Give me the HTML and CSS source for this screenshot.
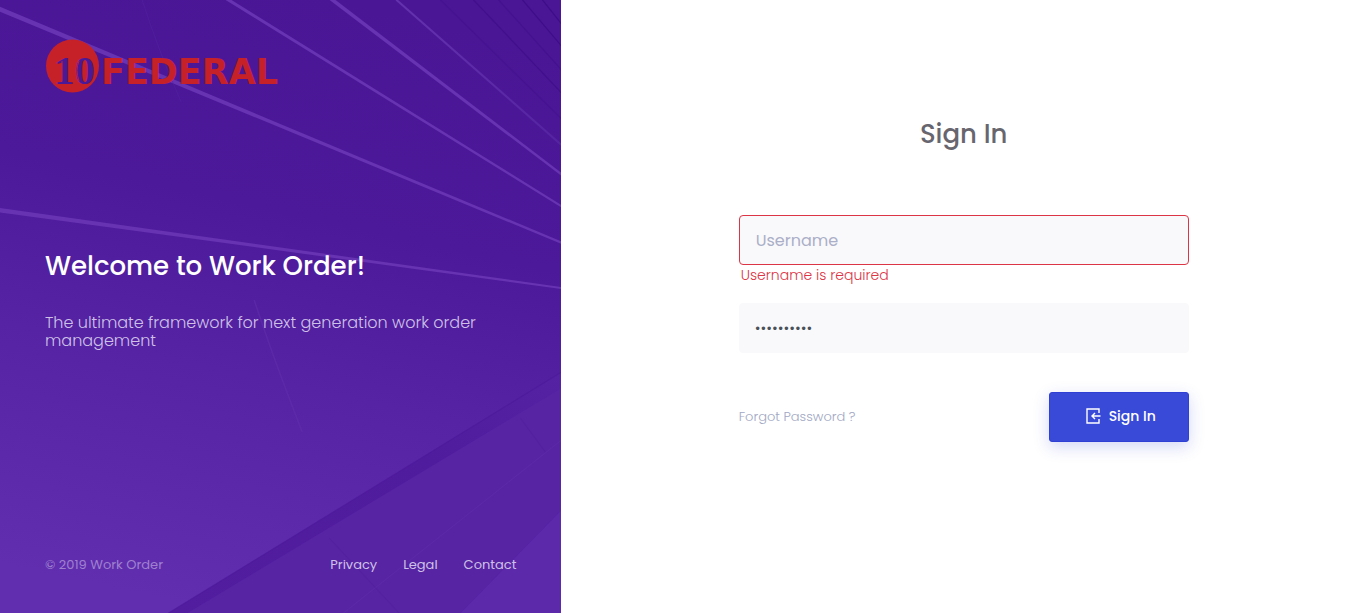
FILE: index.html
```html
<!DOCTYPE html>
<html lang="en">
<head>
<meta charset="utf-8">
<meta name="viewport" content="width=device-width, initial-scale=1">
<title>Work Order</title>
<link rel="stylesheet" href="styles.css">
</head>
<body>
<div class="login">
  <aside class="aside">
    <svg class="aside-art" viewBox="0 0 561 613" preserveAspectRatio="xMidYMid slice" aria-hidden="true">
      <defs>
        <linearGradient id="sky" x1="0.6" y1="0" x2="0.4" y2="1">
          <stop offset="0" stop-color="#4a1696"/>
          <stop offset="0.35" stop-color="#4c199a"/>
          <stop offset="0.62" stop-color="#5523a4"/>
          <stop offset="1" stop-color="#612eb0"/>
        </linearGradient>
        <linearGradient id="band" x1="1" y1="0" x2="0" y2="1">
          <stop offset="0" stop-color="#5522a4"/>
          <stop offset="0.35" stop-color="#501c9e"/>
          <stop offset="1" stop-color="#521d9f"/>
        </linearGradient>
        <linearGradient id="fade" gradientUnits="userSpaceOnUse" x1="396" y1="0" x2="561" y2="145">
          <stop offset="0" stop-color="#6532ae"/>
          <stop offset="1" stop-color="#5424a2"/>
        </linearGradient>
      </defs>
      <rect width="561" height="613" fill="url(#sky)"/>
      <g fill="#6733b2">
        <path d="M0 7 L561 241.500 V244 L0 12Z"/>
        <path d="M225 0 H231 L561 205 V207.500Z"/>
        <path d="M329 0 H335 L561 173 V176Z"/>
        <path d="M0 208 L561 287 V289 L0 212.500Z"/>
      </g>
      <path d="M396 0 L561 145" stroke="url(#fade)" stroke-width="2"/>
      <g stroke="#3f0d88" stroke-width="1.200">
        <path d="M440 0 L561 119" opacity="0.400"/>
        <path d="M473 0 L561 93" opacity="0.700"/>
        <path d="M522 0 L561 46"/>
        <path d="M542 0 L561 24"/>
        <path d="M498 0 L561 70" opacity="0.500"/>
      </g>
      <path d="M142 0 Q158 50 181 102" fill="none" stroke="#5423a1" stroke-width="1" opacity="0.500"/>
      <path d="M254 300 Q272 355 302 432" fill="none" stroke="#6432ae" stroke-width="1.500" opacity="0.500"/>
      <path d="M561 372 L168 613 H561Z" fill="url(#band)"/>
      <path d="M561 372 L168 613" stroke="#4d189a" stroke-width="1" opacity="0.600"/>
      <path d="M561 388 L187 613 H460 L561 510Z" fill="#5724a4"/>
      <path d="M561 510 L460 613 H561Z" fill="#5d29ab"/>
      <path d="M561 440 L343 613" stroke="#6330ad" stroke-width="1" opacity="0.400"/>
      <path d="M329 538 L399 613 M520 418 L545 452" stroke="#4d1a99" stroke-width="1" opacity="0.300"/>
    </svg>
    <a class="logo" href="#" aria-label="10 Federal">
      <svg width="252" height="54" viewBox="0 0 252 54" aria-hidden="true">
        <circle cx="27.500" cy="27" r="26.500" fill="#c62128"/>
        <text x="9" y="45" class="logo-number">10</text>
        <path d="M17 22 V42 M34 22 Q30 31 34 42" fill="none" stroke="#c62128" stroke-width="1"/>
        <text x="56" y="45" class="logo-word">FEDERAL</text>
      </svg>
    </a>
    <div class="intro">
      <h1 class="intro-title">Welcome to Work Order!</h1>
      <p class="intro-text">The ultimate framework for next generation work order management</p>
    </div>
    <footer class="footer">
      <span class="copyright">© 2019 Work Order</span>
      <nav class="footer-nav">
        <a href="#">Privacy</a>
        <a href="#">Legal</a>
        <a href="#">Contact</a>
      </nav>
    </footer>
  </aside>
  <main class="main">
    <form class="form">
      <h2 class="form-title">Sign In</h2>
      <input class="field field-invalid" type="text" placeholder="Username" aria-label="Username" aria-describedby="username-error">
      <div class="error" id="username-error">Username is required</div>
      <input class="field field-password" type="password" value="abcdefghij" aria-label="Password">
      <div class="actions">
        <a class="forgot" href="#">Forgot Password ?</a>
        <button class="submit" type="button">
          <svg width="16" height="16" viewBox="0 0 16 16" fill="none" stroke="currentColor" stroke-width="1.400" aria-hidden="true">
            <path d="M14 5 V1 H2 V15 H14 V11 M15.500 8 H7 M10 5 L7 8 L10 11"/>
          </svg>
          <span>Sign In</span>
        </button>
      </div>
    </form>
  </main>
</div>
</body>
</html>
```
FILE: styles.css
```css
* {
  box-sizing: border-box;
}

body {
  margin: 0;
  font-family: Poppins, Inter, sans-serif;
  font-size: 13px;
  color: #646c9a;
  background: #fff;
}

a {
  color: inherit;
  text-decoration: none;
}

.login {
  display: flex;
  min-height: 100vh;
}

.aside {
  position: relative;
  isolation: isolate;
  flex: 0 0 41.1%;
  display: flex;
  flex-direction: column;
  justify-content: space-between;
  padding: 39px 45px 38px;
  background: #501d9e;
  color: #fff;
}

.aside-art {
  position: absolute;
  inset: 0;
  z-index: -1;
  width: 100%;
  height: 100%;
}

.logo,
.logo svg {
  display: block;
}

.logo-number {
  font-family: "Liberation Serif", serif;
  font-weight: bold;
  font-size: 41px;
  fill: #4b1998;
}

.logo-word {
  font-family: "DejaVu Sans", sans-serif;
  font-weight: bold;
  font-size: 35px;
  fill: #c62128;
}

.intro {
  padding-bottom: 48px;
}

.intro-title {
  margin: 0 0 32px;
  font-size: 26px;
  line-height: 32px;
  font-weight: 500;
}

.intro-text {
  margin: 0;
  font-size: 16px;
  line-height: 18px;
  font-weight: 300;
  color: #cfc1e6;
}

.footer {
  display: flex;
  justify-content: space-between;
  line-height: 20px;
}

.copyright {
  color: #9f80ce;
}

.footer-nav {
  display: flex;
  gap: 26px;
  color: #cfc1e6;
}

.main {
  flex: 1;
  padding: 114px 24px 40px;
}

.form {
  max-width: 450px;
  margin: 0 auto;
}

.form-title {
  margin: 0 0 61px;
  font-size: 26px;
  line-height: 40px;
  font-weight: 500;
  text-align: center;
  color: #67666e;
}

.field {
  display: block;
  width: 100%;
  height: 50px;
  padding: 0 16px;
  border: 1px solid #f9f9fc;
  border-radius: 4px;
  background: #f9f9fc;
  font: inherit;
  font-size: 16px;
  color: #495057;
}

.field::placeholder {
  color: #abafc7;
  opacity: 1;
}

.field-invalid {
  border-color: #dc3545;
}

.field-password {
  padding: 0 15px;
  font-size: 14px;
}

.error {
  padding: 0 2px;
  margin-bottom: 18px;
  font-size: 14px;
  line-height: 20px;
  font-weight: 300;
  color: #dc3545;
}

.actions {
  display: flex;
  align-items: center;
  justify-content: space-between;
  margin-top: 39px;
}

.forgot {
  font-weight: 300;
  color: #a1a8c3;
}

.submit {
  display: flex;
  align-items: center;
  justify-content: center;
  gap: 8px;
  width: 140px;
  height: 50px;
  padding: 0 0 2px 3px;
  border: 1px solid #2f40d4;
  border-radius: 3px;
  background: #384ad7;
  box-shadow: 0 5px 16px rgba(56, 74, 215, 0.22);
  font: inherit;
  font-size: 14px;
  font-weight: 500;
  color: #fff;
}
```
